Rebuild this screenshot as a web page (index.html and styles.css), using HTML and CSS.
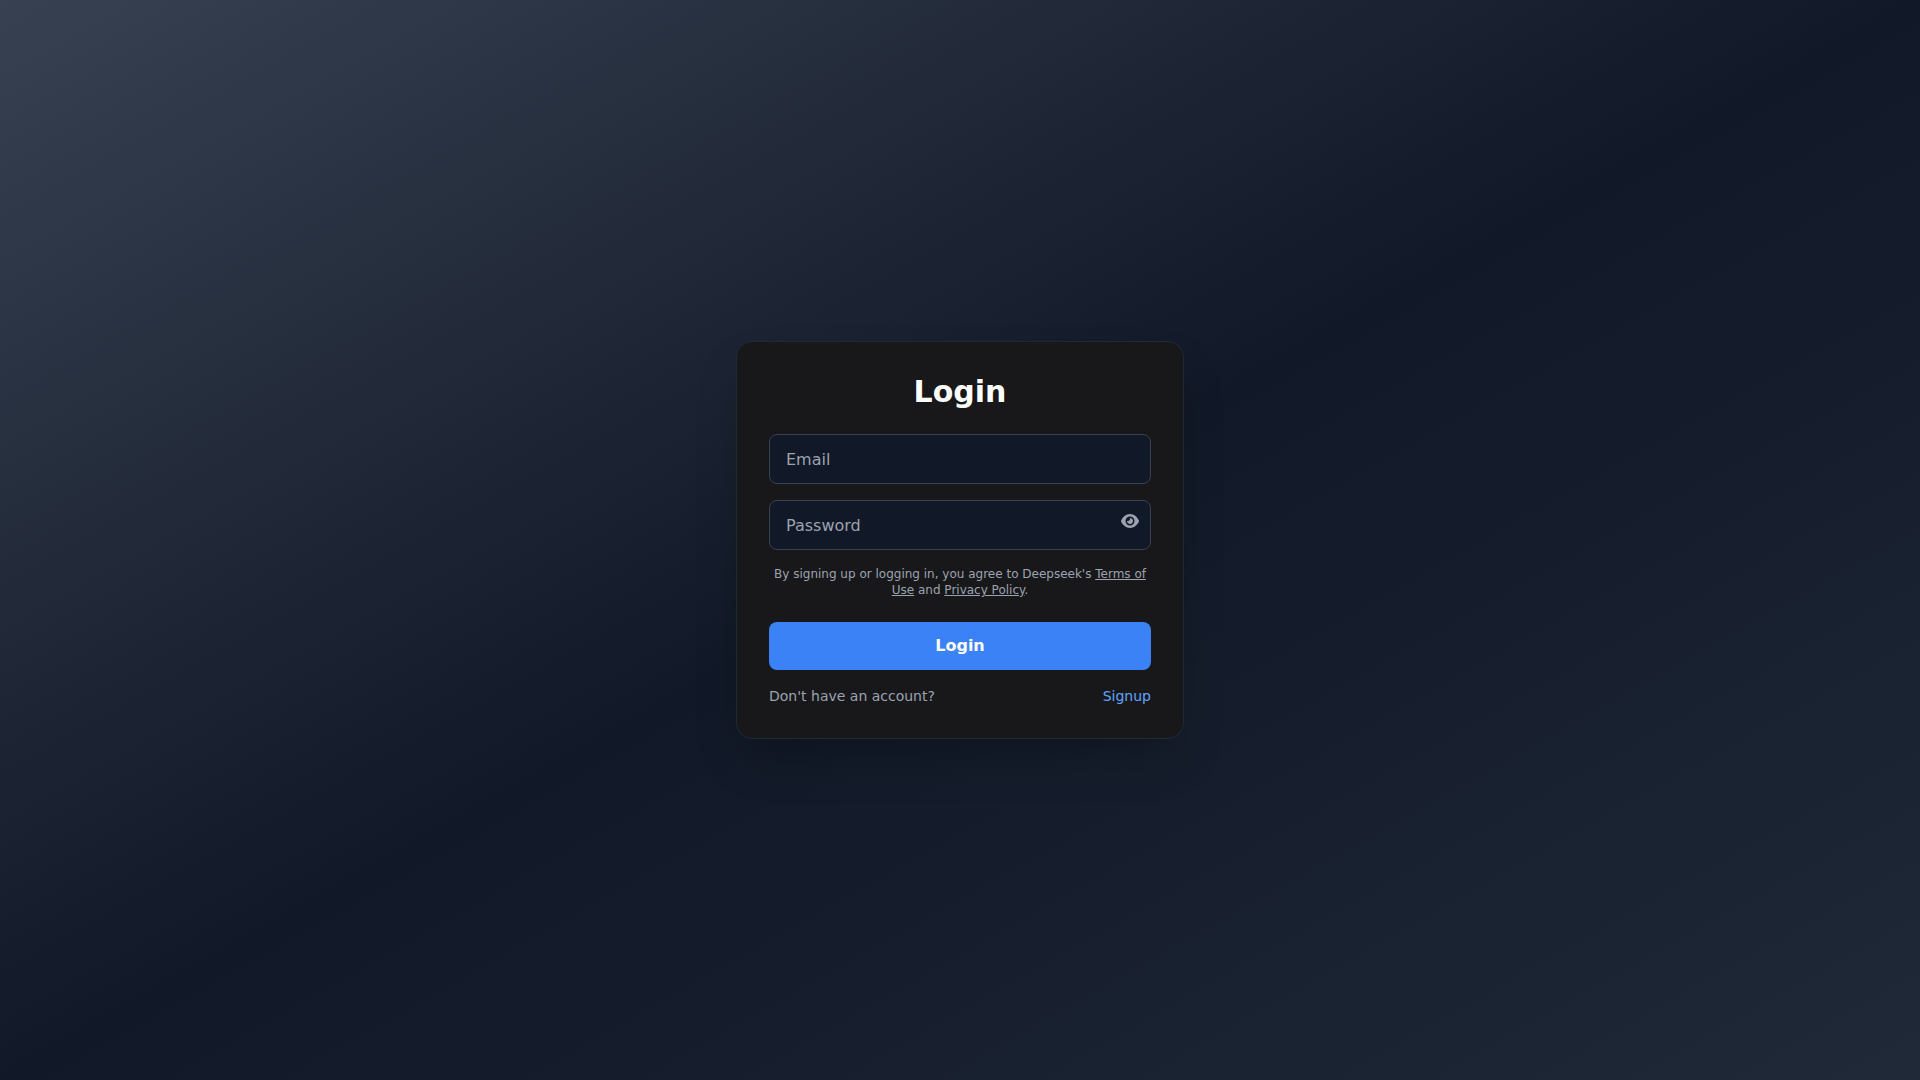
FILE: index.html
```
<!DOCTYPE html>
<html lang="en">
<head>
<meta charset="utf-8">
<title>Login</title>
<meta name="viewport" content="width=device-width, initial-scale=1">
<link rel="stylesheet" href="styles.css">
</head>
<body>
<main class="card">
  <h1 class="title">Login</h1>
  <form class="form">
    <input class="input" type="email" name="email" placeholder="Email" aria-label="Email">
    <div class="field">
      <input class="input" type="password" name="password" placeholder="Password" aria-label="Password">
      <button class="toggle" type="button" aria-label="Show password">
        <svg viewBox="0 0 576 512" width="18" height="18" fill="currentColor"><path d="M288 32c-80.8 0-145.5 36.8-192.6 80.6C48.6 156 17.3 208 2.5 243.7c-3.3 7.9-3.3 16.7 0 24.6C17.3 304 48.6 356 95.4 399.4C142.5 443.2 207.2 480 288 480s145.5-36.8 192.6-80.6c46.8-43.5 78.1-95.4 93-131.1c3.3-7.9 3.3-16.7 0-24.6c-14.9-35.7-46.2-87.7-93-131.1C433.5 68.8 368.8 32 288 32zM144 256a144 144 0 1 1 288 0 144 144 0 1 1 -288 0zm144-64c0 35.3-28.7 64-64 64c-7.1 0-13.9-1.2-20.3-3.3c-5.5-1.8-11.9 1.6-11.7 7.4c.3 6.9 1.3 13.8 3.2 20.7c13.7 51.2 66.4 81.6 117.6 67.9s81.6-66.4 67.9-117.6c-11.1-41.5-47.8-69.4-88.6-71.1c-5.8-.2-9.2 6.1-7.4 11.7c2.1 6.4 3.3 13.2 3.3 20.3z"/></svg>
      </button>
    </div>
    <p class="terms">By signing up or logging in, you agree to Deepseek's <a href="#">Terms of Use</a> and <a href="#">Privacy Policy</a>.</p>
    <button class="submit" type="submit">Login</button>
  </form>
  <div class="footer">
    <span>Don't have an account?</span>
    <a class="signup" href="#">Signup</a>
  </div>
</main>
<script>
var password = document.querySelector('.field .input'),
    toggle = document.querySelector('.toggle');

// Toggle password visibility
toggle.addEventListener('click', e => {
  password.type = password.type === 'password' ? 'text' : 'password';
})
</script>
</body>
</html>
```
FILE: styles.css
```
* {
  box-sizing: border-box;
}

body {
  margin: 0;
  min-height: 100vh;
  display: flex;
  align-items: center;
  justify-content: center;
  font-family: "DejaVu Sans", sans-serif;
  font-size: 16px;
  line-height: 24px;
  color: #9ca3af;
  background: linear-gradient(to bottom right, #374151, #111827, #1f2937);
}

.card {
  width: 100%;
  max-width: 448px;
  padding: 32px;
  background: #18181b;
  border: 1px solid #1f2937;
  border-radius: 16px;
  box-shadow: 0 25px 50px -12px rgba(0, 0, 0, .25);
}

.title {
  margin: 0 0 24px;
  font-size: 30px;
  line-height: 36px;
  text-align: center;
  color: white;
}

.form {
  display: flex;
  flex-direction: column;
  gap: 16px;
}

.field {
  position: relative;
}

.input {
  display: block;
  width: 100%;
  height: 50px;
  padding: 12px 16px;
  font-family: inherit;
  font-size: 16px;
  color: white;
  background: #111827;
  border: 1px solid #374151;
  border-radius: 8px;
}
.input::placeholder {
  color: #9ca3af;
}

.toggle {
  position: absolute;
  top: 12px;
  right: 12px;
  padding: 0;
  border: 0;
  background: none;
  color: #9ca3af;
  cursor: pointer;
}
.toggle svg {
  display: block;
}

.terms {
  margin: 0 0 8px;
  font-size: 12px;
  line-height: 16px;
  text-align: center;
}
.terms a {
  color: inherit;
}

.submit {
  padding: 12px;
  font: inherit;
  font-weight: bold;
  color: white;
  background: #3b82f6;
  border: 0;
  border-radius: 8px;
  cursor: pointer;
}

.footer {
  display: flex;
  justify-content: space-between;
  margin-top: 16px;
  font-size: 14px;
  line-height: 20px;
}

.signup {
  color: #60a5fa;
  text-decoration: none;
}
```
